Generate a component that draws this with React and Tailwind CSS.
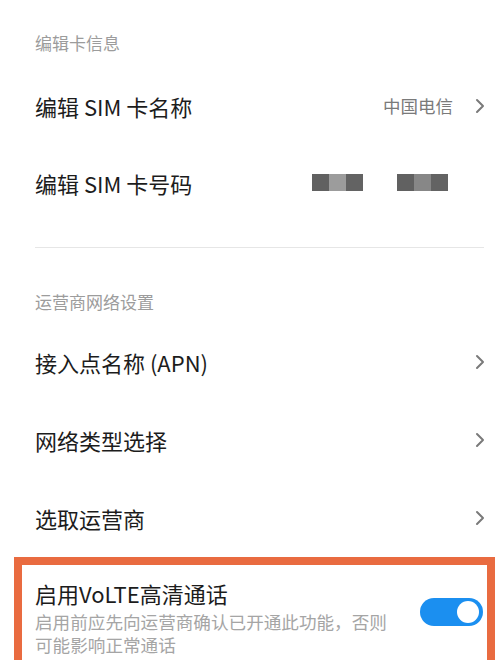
import React from "react";

const Chevron = () => (
  <svg width="10" height="16" viewBox="0 0 10 16" className="shrink-0">
    <path d="M2 2 L8 8 L2 14" fill="none" stroke="#7a7a7a" strokeWidth="2" strokeLinecap="round" strokeLinejoin="round" />
  </svg>
);

const Row = ({ label, value, chevron = true, children, h = "h-[78px]" }) => (
  <div className={`flex items-center justify-between pl-[35px] pr-[15px] ${h}`}>
    <span className="text-[22px] text-[#1c1c1c] leading-none">{label}</span>
    <div className="flex items-center gap-[22px]">
      {value && <span className="text-[17.5px] text-[#7a7a7a] leading-none">{value}</span>}
      {children}
      {chevron && <Chevron />}
    </div>
  </div>
);

const Blur = ({ mid }) => (
  <div className="flex h-[17px]">
    <div className="w-[17px] bg-[#616161]" />
    <div className={`w-[17px] ${mid}`} />
    <div className="w-[17px] bg-[#636363]" />
  </div>
);

export default function App() {
  return (
    <div
      className="w-[500px] h-[660px] bg-white overflow-hidden"
      style={{ fontFamily: '"Noto Sans CJK SC", "Noto Sans", sans-serif' }}
    >
      <div className="h-[67px] pt-[33px] pl-[35px]">
        <span className="block text-[17px] leading-[20px] text-[#9c9c9c]">编辑卡信息</span>
      </div>
      <Row label="编辑 SIM 卡名称" value="中国电信" h="h-[77px]" />
      <div className="flex items-center justify-between pl-[35px] pr-[15px] h-[77px]">
        <span className="text-[22px] text-[#1c1c1c] leading-none">编辑 SIM 卡号码</span>
        <div className="flex items-center gap-[34px] pr-[37px]">
          <Blur mid="bg-[#9c9c9c]" />
          <Blur mid="bg-[#878787]" />
        </div>
      </div>
      <div className="mt-[26px] ml-[35px] mr-[16px] h-px bg-[#e6e6e6]" />
      <div className="h-[75px] pt-[44px] pl-[35px]">
        <span className="block text-[17px] leading-[20px] text-[#9c9c9c]">运营商网络设置</span>
      </div>
      <Row label="接入点名称 (APN)" />
      <Row label="网络类型选择" />
      <Row label="选取运营商" />
      <div className="ml-[14px] mr-[5px] border-[8px] border-[#e96b40] h-[120px] flex justify-between pl-[13px] pr-[4px] pt-[14px]">
        <div className="flex flex-col">
          <span className="text-[22px] leading-[28px] text-[#1c1c1c]">启用VoLTE高清通话</span>
          <span className="text-[17.6px] leading-[23px] text-[#a5a5a5] mt-[3px]">
            启用前应先向运营商确认已开通此功能，否则
            <br />
            可能影响正常通话
          </span>
        </div>
        <div className="mt-[19px] w-[63px] h-[28px] rounded-full bg-[#1b8ff0] flex items-center justify-end pr-[4px] shrink-0">
          <div className="w-[22px] h-[22px] rounded-full bg-white" />
        </div>
      </div>
    </div>
  );
}
